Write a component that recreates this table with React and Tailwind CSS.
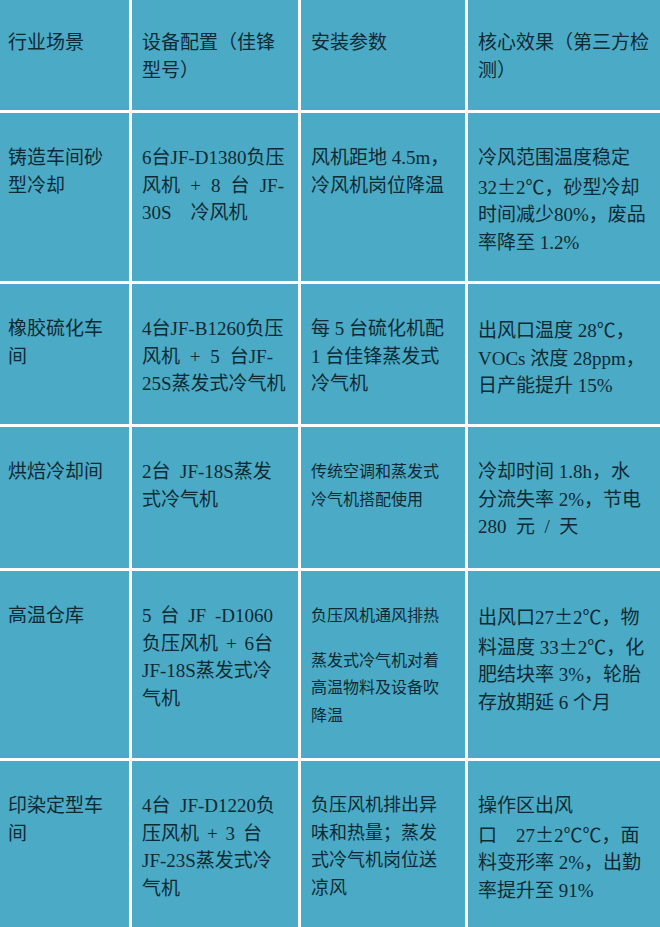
import React from 'react';

// ± and ℃ are full-width in the original, so set them in the CJK face
function fix(s) {
  return s.split(/([±℃])/).map((p, i) =>
    p === '±' || p === '℃' ? (
      <span key={i} className="font-['Noto_Sans_CJK_SC',sans-serif]">
        {p}
      </span>
    ) : (
      p
    )
  );
}

// a justified line: tokens spread over a fixed width
function J({ w, parts }) {
  return (
    <div className={`flex justify-between whitespace-nowrap ${w}`}>
      {parts.map((p, i) => (
        <span key={i}>{p}</span>
      ))}
    </div>
  );
}

function Cell({ head, small, children }) {
  return (
    <div
      className={`bg-[#4baac6] pl-[10px] ${head ? 'pt-[29px]' : 'pt-[31px]'} ${
        small ? 'text-[16px]' : ''
      }`}
    >
      {children}
    </div>
  );
}

function L({ children }) {
  return (
    <div className="whitespace-pre">
      {typeof children === 'string' ? fix(children) : children}
    </div>
  );
}

function App() {
  return (
    <div className="h-[927px] w-[660px] overflow-hidden bg-white">
      <div className="grid grid-cols-[129px_166px_164px_1fr] grid-rows-[110px_168px_140px_141px_187px_200px] gap-[3px] bg-white font-['Liberation_Serif','Noto_Sans_CJK_SC',serif] text-[19px] leading-[27.5px] text-[#0f2a33]">
        {/* header */}
        <Cell head>
          <div className="-ml-[2px]">
            <L>行业场景</L>
          </div>
        </Cell>
        <Cell head>
          <L>设备配置（佳锋</L>
          <L>型号）</L>
        </Cell>
        <Cell head>
          <L>安装参数</L>
        </Cell>
        <Cell head>
          <L>核心效果（第三方检</L>
          <L>测）</L>
        </Cell>

        {/* 铸造 */}
        <Cell>
          <div className="-ml-[2px]">
            <L>铸造车间砂</L>
            <L>型冷却</L>
          </div>
        </Cell>
        <Cell>
          <L>6台JF-D1380负压</L>
          <J w="w-[142px]" parts={['风机', '+', '8', '台', 'JF-']} />
          <L>30S　冷风机</L>
        </Cell>
        <Cell>
          <L>风机距地 4.5m，</L>
          <L>冷风机岗位降温</L>
        </Cell>
        <Cell>
          <L>冷风范围温度稳定</L>
          <L>32±2℃，砂型冷却</L>
          <L>时间减少80%，废品</L>
          <L>率降至 1.2%</L>
        </Cell>

        {/* 橡胶 */}
        <Cell>
          <div className="-ml-[2px]">
            <L>橡胶硫化车</L>
            <L>间</L>
          </div>
        </Cell>
        <Cell>
          <L>4台JF-B1260负压</L>
          <J w="w-[131px]" parts={['风机', '+', '5', '台JF-']} />
          <L>25S蒸发式冷气机</L>
        </Cell>
        <Cell>
          <L>每 5 台硫化机配</L>
          <L>1 台佳锋蒸发式</L>
          <L>冷气机</L>
        </Cell>
        <Cell>
          <L>出风口温度 28℃，</L>
          <L>VOCs 浓度 28ppm，</L>
          <L>日产能提升 15%</L>
        </Cell>

        {/* 烘焙 */}
        <Cell>
          <div className="-ml-[2px]">
            <L>烘焙冷却间</L>
          </div>
        </Cell>
        <Cell>
          <L>2台  JF-18S蒸发</L>
          <L>式冷气机</L>
        </Cell>
        <Cell small>
          <L>传统空调和蒸发式</L>
          <L>冷气机搭配使用</L>
        </Cell>
        <Cell>
          <L>冷却时间 1.8h，水</L>
          <L>分流失率 2%，节电</L>
          <L>280  元  /  天</L>
        </Cell>

        {/* 高温仓库 */}
        <Cell>
          <div className="-ml-[2px]">
            <L>高温仓库</L>
          </div>
        </Cell>
        <Cell>
          <J w="w-[131px]" parts={['5', '台', 'JF', '-D1060']} />
          <J w="w-[131px]" parts={['负压风机', '+', '6台']} />
          <L>JF-18S蒸发式冷</L>
          <L>气机</L>
        </Cell>
        <Cell small>
          <div className="mb-[17px]">
            <L>负压风机通风排热</L>
          </div>
          <L>蒸发式冷气机对着</L>
          <L>高温物料及设备吹</L>
          <L>降温</L>
        </Cell>
        <Cell>
          <L>出风口27±2℃，物</L>
          <L>料温度 33±2℃，化</L>
          <L>肥结块率 3%，轮胎</L>
          <L>存放期延 6 个月</L>
        </Cell>

        {/* 印染 */}
        <Cell>
          <div className="-ml-[2px]">
            <L>印染定型车</L>
            <L>间</L>
          </div>
        </Cell>
        <Cell>
          <L>4台  JF-D1220负</L>
          <J w="w-[120px]" parts={['压风机', '+', '3', '台']} />
          <L>JF-23S蒸发式冷</L>
          <L>气机</L>
        </Cell>
        <Cell>
          <div className="text-[18px]">
            <L>负压风机排出异</L>
            <L>味和热量；蒸发</L>
            <L>式冷气机岗位送</L>
            <L>凉风</L>
          </div>
        </Cell>
        <Cell>
          <L>操作区出风</L>
          <L>口　27±2℃℃，面</L>
          <L>料变形率 2%，出勤</L>
          <L>率提升至 91%</L>
        </Cell>
      </div>
    </div>
  );
}

export default App;
